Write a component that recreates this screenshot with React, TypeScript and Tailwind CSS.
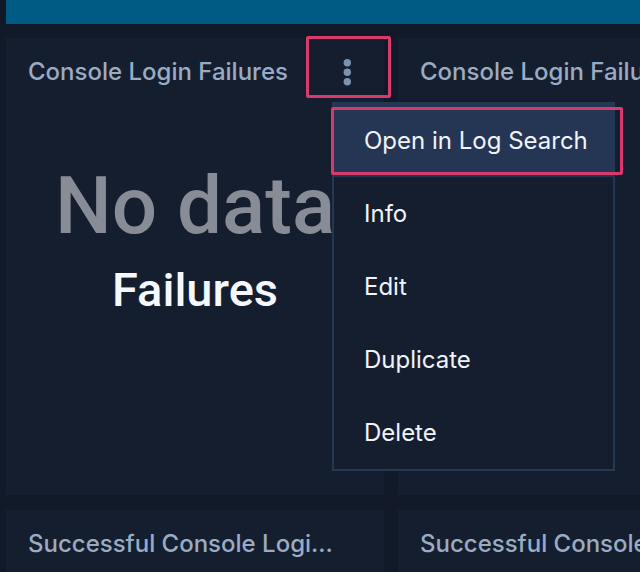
import { useState } from 'react';
import clsx from 'clsx';

const menuItems = ['Open in Log Search', 'Info', 'Edit', 'Duplicate', 'Delete'];

interface PanelProps {
  title: string;
  children?: React.ReactNode;
  actions?: React.ReactNode;
}

const Panel = ({ title, children, actions }: PanelProps) => (
  <section className="relative flex min-h-[457px] flex-col bg-[#151e2f]">
    <header className="flex h-[68px] items-center justify-between pl-[22px]">
      <h2 className="whitespace-nowrap text-2xl font-medium text-[#9aacc4]">{title}</h2>
      {actions}
    </header>
    {children}
  </section>
);

const PanelMenu = () => {
  const [active, setActive] = useState(menuItems[0]);

  return (
    <div
      role="menu"
      className="absolute left-full top-16 z-10 -ml-[52px] w-[283px] border-2 border-[#263752] bg-[#151e2f]"
    >
      {menuItems.map((item) => (
        <button
          key={item}
          type="button"
          role="menuitem"
          onMouseEnter={() => setActive(item)}
          className={clsx(
            'block h-[73px] w-full whitespace-nowrap px-[30px] text-left text-2xl text-[#f0f3f9]',
            item === active && 'bg-[#253654]'
          )}
        >
          {item}
        </button>
      ))}
      <span className="pointer-events-none absolute -left-[3px] -right-2.5 top-[3px] h-[68px] rounded-xs border-3 border-[#d93a6c]" />
    </div>
  );
};

const PanelActions = () => {
  const [open, setOpen] = useState(true);

  return (
    <>
      <div className="relative">
        <button
          type="button"
          aria-label="Panel options"
          aria-expanded={open}
          onClick={() => setOpen(!open)}
          className="flex h-[68px] w-[74px] items-center justify-center"
        >
          <svg width="8" height="28" viewBox="0 0 8 28" fill="#7c93b0">
            <circle cx="4.3" cy="4.7" r="3.7" />
            <circle cx="4.3" cy="14.2" r="3.7" />
            <circle cx="4.3" cy="23.7" r="3.7" />
          </svg>
        </button>
        <span className="pointer-events-none absolute -right-[7px] -top-0.5 h-[62px] w-[85px] rounded-xs border-3 border-[#d93a6c]" />
      </div>
      {open && <PanelMenu />}
    </>
  );
};

export default function App() {
  return (
    <main className="h-screen overflow-hidden bg-[#111827] pl-1.5 font-['Inter',sans-serif]">
      <div className="h-6 bg-[#005b84]" />
      <div className="mt-3.5 grid grid-cols-[minmax(378px,1fr)_minmax(378px,1fr)] gap-x-3.5 gap-y-[15px]">
        <Panel title="Console Login Failures" actions={<PanelActions />}>
          <div className="flex flex-col items-center whitespace-nowrap pt-[54px] font-['Roboto',sans-serif] font-medium">
            <p className="text-[80px] leading-[92px] text-[#888c97]">No data</p>
            <p className="text-[47px] leading-[76px] text-[#f6f8fd]">Failures</p>
          </div>
        </Panel>
        <Panel title="Console Login Failures" />
        <Panel title="Successful Console Logi..." />
        <Panel title="Successful Console Logi..." />
      </div>
    </main>
  );
}
